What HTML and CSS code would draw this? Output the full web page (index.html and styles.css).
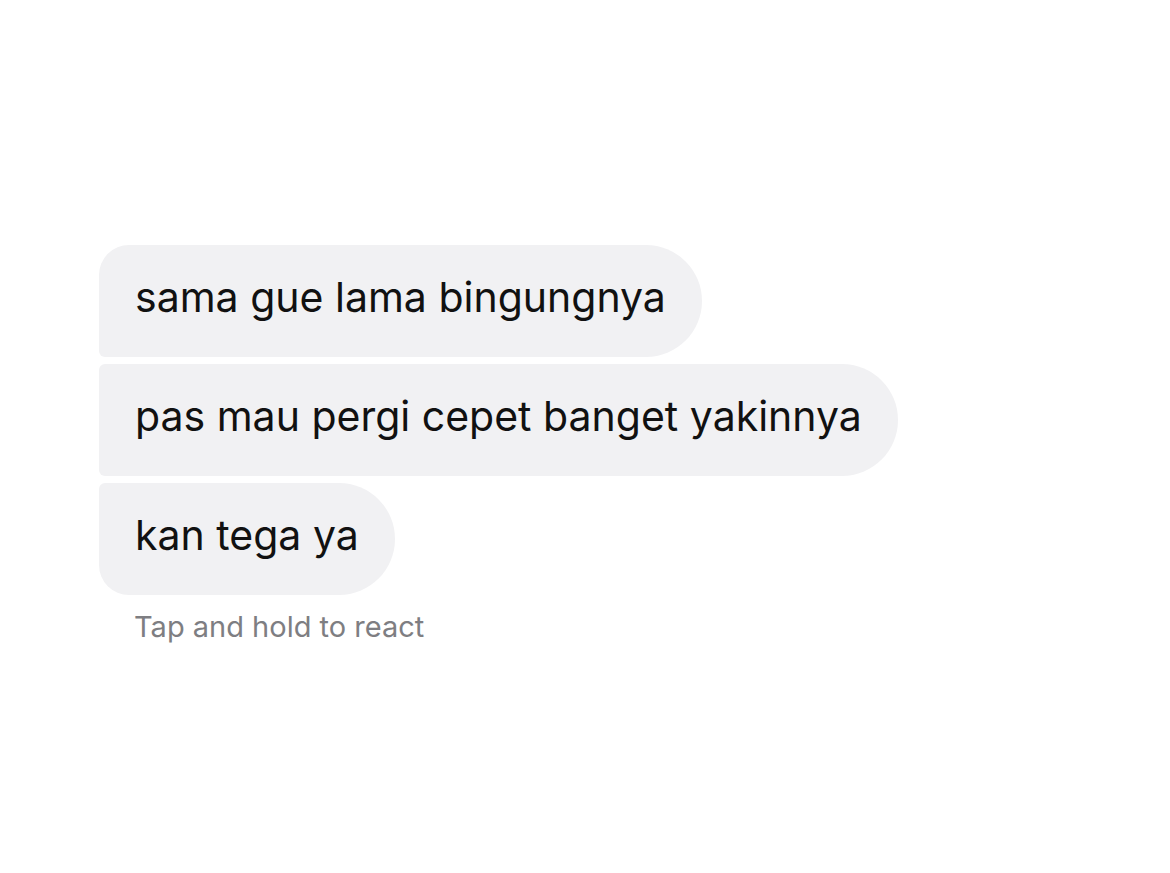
FILE: index.html
```html
<!DOCTYPE html>
<html lang="id">

<head>
    <meta charset="UTF-8">
    <meta name="viewport" content="width=device-width, initial-scale=1.0">
    <title>Pesan</title>
    <link rel="stylesheet" href="styles.css">
</head>

<body>

    <div class="thread">
        <div class="bubble first">sama gue lama bingungnya</div>
        <div class="bubble middle">pas mau pergi cepet banget yakinnya</div>
        <div class="bubble last">kan tega ya</div>
        <div class="hint">Tap and hold to react</div>
    </div>

</body>

</html>
```

FILE: styles.css
```css
/* Styles généraux */
* {
    margin: 0;
    padding: 0;
    box-sizing: border-box;
}

body {
    width: 100vw;
    height: 100vh;
    overflow: hidden;
    background-color: #ffffff;
    font-family: Inter, 'Liberation Sans', sans-serif;
}

/* Fil de messages */
.thread {
    display: flex;
    flex-direction: column;
    align-items: flex-start;
    gap: 7px;
    padding: 245px 0 0 99px;
}

.bubble {
    height: 112px;
    display: flex;
    align-items: center;
    padding: 0 36px 8px 36px;
    background-color: #f1f1f3;
    color: #111111;
    font-size: 41px;
    white-space: nowrap;
    border-radius: 6px 56px 56px 6px;
}

.bubble.first {
    border-top-left-radius: 30px;
}

.bubble.last {
    border-bottom-left-radius: 30px;
}

/* Texte d'aide */
.hint {
    margin-top: 7px;
    padding-left: 35px;
    font-size: 29px;
    color: #7e7e82;
}
```
